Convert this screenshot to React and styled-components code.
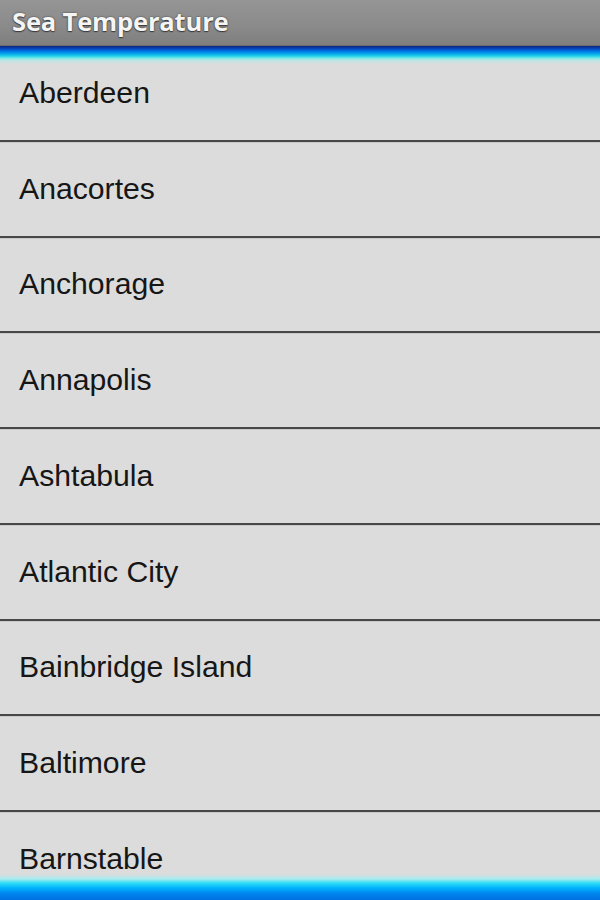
import React from "react";
import styled, { createGlobalStyle } from "styled-components";

const Global = createGlobalStyle`
  html, body { margin: 0; padding: 0; }
  body { background: #dcdcdc; overflow: hidden; }
`;

const Screen = styled.div`
  position: relative;
  width: 600px;
  height: 900px;
  overflow: hidden;
  background: #dcdcdc;
  display: flex;
  flex-direction: column;
`;

const TitleBar = styled.header`
  height: 46px;
  flex: 0 0 46px;
  display: flex;
  align-items: center;
  padding-left: 12px;
  box-sizing: border-box;
  background: linear-gradient(#959595, #8a8a8a 60%, #7e7e7e);
  border-bottom: 1px solid #6a6a6a;
`;

const Title = styled.h1`
  margin: 0;
  font-family: "Open Sans", "DejaVu Sans", sans-serif;
  font-weight: 700;
  font-size: 25.6px;
  letter-spacing: -0.2px;
  color: #f5f5f5;
  text-shadow: 0 0 2px rgba(0, 0, 0, 0.6), 0 1px 1px rgba(0, 0, 0, 0.5);
  line-height: 1;
  margin-top: -1px;
`;

const TopGlow = styled.div`
  position: absolute;
  left: 0;
  right: 0;
  top: 46px;
  height: 18px;
  background: linear-gradient(
    #0a2a80 0px,
    #0a3aa8 2px,
    #0060d8 4px,
    #0098ec 7px,
    #20d0e8 10px,
    #70e8e8 12px,
    #b8e6e6 14px,
    #dcdcdc 18px
  );
  pointer-events: none;
`;

const BottomGlow = styled.div`
  position: absolute;
  left: 0;
  right: 0;
  bottom: 0;
  height: 26px;
  background: linear-gradient(
    rgba(220, 220, 220, 0) 0px,
    #a8ecf0 5px,
    #30dcf4 9px,
    #00b4ff 14px,
    #0088f0 19px,
    #0070e0 26px
  );
  pointer-events: none;
`;

const List = styled.ul`
  list-style: none;
  margin: 0;
  padding: 0;
`;

const Row = styled.li`
  box-sizing: border-box;
  height: 95.75px;
  display: flex;
  align-items: center;
  padding-left: 19px;
  border-bottom: 2px solid #474747;
  box-shadow: 0 1px 0 #c8c8c8;
  font-family: "Liberation Sans", Arial, sans-serif;
  font-size: 30.2px;
  color: #161616;
`;

const cities = [
  "Aberdeen",
  "Anacortes",
  "Anchorage",
  "Annapolis",
  "Ashtabula",
  "Atlantic City",
  "Bainbridge Island",
  "Baltimore",
  "Barnstable",
];

export default function App() {
  return (
    <Screen>
      <Global />
      <TitleBar>
        <Title>Sea Temperature</Title>
      </TitleBar>
      <List>
        {cities.map((c) => (
          <Row key={c}>{c}</Row>
        ))}
      </List>
      <TopGlow />
      <BottomGlow />
    </Screen>
  );
}
